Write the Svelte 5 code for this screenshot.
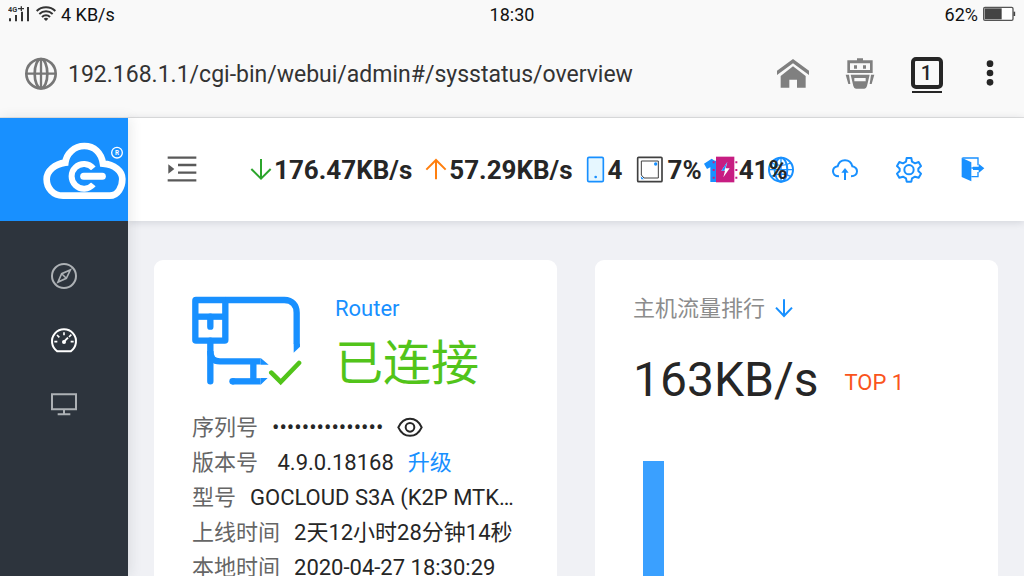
<script>
    let url = $state('192.168.1.1/cgi-bin/webui/admin#/sysstatus/overview');
    let showSerial = $state(false);
    let collapsed = $state(true);

    const hosts = [{ name: 'TOP 1', height: 270 }];

    let serial = $derived(showSerial ? 'S3A020042700181' : '•'.repeat(15));
</script>

<div class="screen" lang="zh-CN">
    <div class="status">
        <div class="status-left">
            <svg width="23" height="18" viewBox="0 0 69 54">
                <text x="0" y="22" font-size="22" font-weight="700" fill="#333">4G</text>
                <path d="M30 11h18M40 4v14" stroke="#333" stroke-width="4" />
                <path d="M6 40v9M24 30v19M42 20v29M60 6v43" stroke="#333" stroke-width="6" />
            </svg>
            <svg width="20" height="16" viewBox="0 0 60 48" fill="none" stroke="#333" stroke-width="6">
                <path d="M2 15C17 0 43 0 58 15M10 24c12-11 28-11 40 0M18 33c7-7 17-7 24 0" />
                <path d="M23 38c4-4 10-4 14 0l-7 7z" fill="#333" stroke="none" />
            </svg>
            <span>4 KB/s</span>
        </div>
        <span>18:30</span>
        <div class="status-right">
            <span>62%</span>
            <svg width="33" height="16" viewBox="0 0 99 48">
                <rect x="2" y="4" width="88" height="39" rx="4" fill="#fff" stroke="#555" stroke-width="4" />
                <path d="M5 7h51v33H5z" fill="#444" />
                <path d="M94 17v13" stroke="#444" stroke-width="5" />
            </svg>
        </div>
    </div>

    <div class="browser">
        <svg width="34" height="34" viewBox="0 0 102 102" fill="none" stroke="#777" stroke-width="8">
            <circle cx="51" cy="53" r="44" />
            <ellipse cx="51" cy="53" rx="19" ry="44" />
            <path d="M51 9v88M7 53h88" stroke-width="7" />
        </svg>
        <input class="url" type="text" aria-label="URL" bind:value={url} />
        <button aria-label="主页">
            <svg width="34" height="34" viewBox="0 0 102 102" fill="#808080">
                <path d="M51 9l48 35v13L51 22 3 57V44z" />
                <path d="M51 31l38 29v35H63V71H40v24H14V60z" />
            </svg>
        </button>
        <button aria-label="助手">
            <svg width="34" height="34" viewBox="0 0 102 102" fill="#808080">
                <path d="M42 7h18v6h29v38H13V13h29zM21 22v20h60V22z" fill-rule="evenodd" />
                <path d="M33 28h9v10h-9zM60 28h9v10h-9zM8 56h10l4 28h-6zM84 56h10l-8 28h-6z" />
                <path d="M23 56h57l-8 34q-2 8-8 8H39q-6 0-8-8zM34 66v10h34V66z" fill-rule="evenodd" />
            </svg>
        </button>
        <button class="tabs" aria-label="标签页"><span>1</span></button>
        <button class="more" aria-label="菜单">
            <svg width="34" height="34" viewBox="0 0 102 102" fill="#262626">
                <circle cx="51" cy="23" r="10" />
                <circle cx="51" cy="51" r="10" />
                <circle cx="51" cy="79" r="10" />
            </svg>
        </button>
    </div>

    <div class="app">
        <aside>
            <div class="logo">
                <svg width="86" height="60" viewBox="127 76 258 180" fill="none" stroke="#fff">
                    <path d="M190 243h140c25 0 38-26 38-50s-24-44-58-46c-5-34-27-53-56-53-31 0-54 24-57 50-31 4-56 24-56 50s19 49 49 49z" stroke-width="20" />
                    <path d="M281 161a37 37 0 1 0 0 48" stroke-width="18" />
                    <path d="M264 185h46" stroke="#1890ff" stroke-width="36" stroke-linecap="round" />
                    <path d="M252 185h56" stroke-width="21" stroke-linecap="round" />
                    <circle cx="352" cy="114" r="16" stroke-width="4" />
                    <text x="352" y="121" font-size="19" font-weight="700" text-anchor="middle" fill="#fff" stroke="none">R</text>
                </svg>
            </div>
            <nav>
                <a href="#/guide" aria-label="向导">
                    <svg width="28" height="28" viewBox="0 0 84 84" fill="none" stroke="#adb1b5" stroke-width="6">
                        <circle cx="42" cy="42" r="36" />
                        <path d="M61 24L49 49 24 60l11-25zM36 36l12 12" stroke-width="5" />
                    </svg>
                </a>
                <a href="#/sysstatus/overview" aria-label="概览">
                    <svg width="28" height="28" viewBox="0 0 84 84" fill="none" stroke="#fff" stroke-width="6">
                        <path d="M22 76a36 36 0 1 1 40 0z" stroke-linejoin="round" />
                        <path d="M42 19v9M13 47h9M62 47h9M21 27l7 7M57 33l7-7" stroke-width="5" />
                        <path d="M42 47l12-12" stroke-width="6" />
                        <circle cx="42" cy="48" r="6" fill="#fff" stroke="none" />
                    </svg>
                </a>
                <a href="#/devices" aria-label="设备">
                    <svg width="28" height="28" viewBox="0 0 84 84" fill="none" stroke="#adb1b5" stroke-width="6">
                        <path d="M6 13h72v45H6zM42 58v14M23 73h38" />
                    </svg>
                </a>
            </nav>
        </aside>

        <div class="page">
            <header>
                <button class="fold" aria-label="展开菜单" onclick={() => (collapsed = !collapsed)} aria-expanded={!collapsed}>
                    <svg width="30" height="30" viewBox="0 0 90 90" fill="none" stroke="#595959" stroke-width="7">
                        <path d="M2 8h86M33 30h55M33 53h55M2 76h86" />
                        <path d="M4 28l18 14L4 56z" fill="#595959" stroke="none" />
                    </svg>
                </button>

                <div class="stats">
                    <div class="stat">
                        <svg width="22" height="24" viewBox="0 0 66 72" fill="none" stroke="#2ca52c" stroke-width="6">
                            <path d="M33 3v58M4 33l29 29 29-29" />
                        </svg>
                        <span>176.47KB/s</span>
                    </div>
                    <div class="stat">
                        <svg width="22" height="24" viewBox="0 0 66 72" fill="none" stroke="#ff7f0e" stroke-width="6">
                            <path d="M33 64V6M4 35L33 6l29 29" />
                        </svg>
                        <span>57.29KB/s</span>
                    </div>
                    <div class="stat">
                        <svg width="20" height="28" viewBox="0 0 60 84">
                            <rect x="5" y="4" width="47" height="73" rx="4" fill="#e6f7ff" stroke="#1890ff" stroke-width="5" />
                            <circle cx="29" cy="63" r="4" fill="#1890ff" />
                        </svg>
                        <span>4</span>
                    </div>
                    <div class="stat cpu">
                        <svg width="28" height="28" viewBox="0 0 84 84" fill="none" stroke="#404040">
                            <rect x="5" y="4" width="73" height="73" rx="3" stroke-width="5" />
                            <path d="M16 15h51v51H24l-8-9z" stroke-width="3" />
                            <circle cx="59" cy="24" r="5" fill="#1890ff" stroke="none" />
                            <path d="M14 61l10 9h-8z" fill="#1890ff" stroke="none" />
                        </svg>
                        <span>7%</span>
                    </div>
                    <div class="stat memory">
                        <svg width="28" height="28" viewBox="0 0 84 84">
                            <path d="M8 16v62M76 16v62" stroke="#c71d82" stroke-width="6" stroke-dasharray="6 17" />
                            <rect x="15" y="2" width="55" height="77" fill="#c71d82" />
                            <path d="M49 18L31 44h11l-5 20 19-27H44z" fill="#fff" />
                            <path d="M49 18L31 44h9z" fill="#1890ff" />
                        </svg>
                        <span>41%</span>
                    </div>
                </div>

                <div class="tools">
                    <button aria-label="主题">
                        <svg width="28" height="28" viewBox="0 0 84 84" fill="#1890ff">
                            <path d="M26 8q16 14 32 0l23 15-9 16-10-5v44H22V34l-10 5-9-16z" />
                        </svg>
                    </button>
                    <button aria-label="语言">
                        <svg width="28" height="28" viewBox="0 0 84 84" fill="none" stroke="#1890ff" stroke-width="6">
                            <circle cx="42" cy="41" r="36" />
                            <ellipse cx="42" cy="41" rx="19" ry="36" />
                            <path d="M42 5v72M6 41h72M13 21q29 14 58 0M13 61q29-14 58 0" stroke-width="4" />
                        </svg>
                    </button>
                    <button aria-label="云端">
                        <svg width="28" height="28" viewBox="0 0 84 84" fill="none" stroke="#1890ff" stroke-width="6">
                            <path d="M24 61C11 61 6 53 6 46c0-9 7-14 14-15 3-12 12-18 22-18s19 6 22 18c8 2 14 7 14 15s-6 15-18 15" />
                            <path d="M42 72V44" />
                            <path d="M42 36l11 14H31z" fill="#1890ff" stroke="none" />
                        </svg>
                    </button>
                    <button aria-label="设置">
                        <svg width="28" height="28" viewBox="0 0 84 84" fill="none" stroke="#1890ff" stroke-width="6" stroke-linejoin="round">
                            <path d="M35 6h14l2 11 9 5 11-4 7 12-8 8v7l8 8-7 12-11-3-9 5-2 10H35l-2-10-9-5-11 3-7-12 8-8v-7l-8-8 7-12 11 4 9-5z" />
                            <circle cx="42" cy="41" r="14" />
                        </svg>
                    </button>
                    <button aria-label="退出">
                        <svg width="28" height="28" viewBox="0 0 84 84" fill="none" stroke="#1890ff" stroke-width="4">
                            <path d="M10 6h47v22M57 48v14H37M37 36h30" />
                            <path d="M8 5l29 14v57L8 63zM42 32h17V23l17 14-17 14v-9H42z" fill="#1890ff" stroke="none" />
                        </svg>
                    </button>
                </div>
            </header>

            <main>
                <section class="card">
                    <div class="summary">
                        <svg width="110" height="90" viewBox="0 0 330 270" fill="none" stroke="#1890ff" stroke-width="19">
                            <rect x="10" y="12" width="90" height="122" rx="2" />
                            <path d="M10 62h90" />
                            <path d="M55 62v30M55 134v122" stroke-linecap="round" />
                            <path d="M100 12h177c24 0 37 17 37 38v94" />
                            <path d="M305 143v27l19-18v-9z" fill="#1890ff" stroke="none" />
                            <path d="M55 165c0 22 10 31 29 31h122M184 196v60" />
                            <path d="M206 186l24 20h-24zM206 266v-20h21z" fill="#1890ff" stroke="none" />
                            <path d="M122 256h84" />
                            <circle cx="122" cy="256" r="10" fill="#1890ff" stroke="none" />
                            <path d="M238 230l28 28 55-57" stroke="#52c41a" stroke-width="14" stroke-linecap="round" />
                        </svg>
                        <div class="state">
                            <a href="#/router">Router</a>
                            <strong>已连接</strong>
                        </div>
                    </div>
                    <dl>
                        <div class="row">
                            <dt>序列号</dt>
                            <dd>{serial}</dd>
                            <button aria-label="显示序列号" onclick={() => (showSerial = !showSerial)}>
                                <svg width="26" height="22" viewBox="0 0 78 66" fill="none" stroke="#262626" stroke-width="6">
                                    <path d="M4 31C20-3 58-3 74 31 58 65 20 65 4 31z" />
                                    <circle cx="39" cy="31" r="13" />
                                </svg>
                            </button>
                        </div>
                        <div class="row">
                            <dt>版本号</dt>
                            <dd>&nbsp;4.9.0.18168</dd>
                            <a href="#/upgrade">升级</a>
                        </div>
                        <div class="row">
                            <dt>型号</dt>
                            <dd>GOCLOUD S3A (K2P MTK7621)</dd>
                        </div>
                        <div class="row">
                            <dt>上线时间</dt>
                            <dd>2天12小时28分钟14秒</dd>
                        </div>
                        <div class="row">
                            <dt>本地时间</dt>
                            <dd>2020-04-27 18:30:29</dd>
                        </div>
                    </dl>
                </section>

                <section class="card">
                    <div class="title">
                        <h2>主机流量排行</h2>
                        <svg width="18" height="20" viewBox="0 0 54 60" fill="none" stroke="#1890ff" stroke-width="6">
                            <path d="M27 1v50M3 26l24 25 24-25" />
                        </svg>
                    </div>
                    <div class="rank">
                        <span class="speed">163KB/s</span>
                        <span class="top">TOP 1</span>
                    </div>
                    <div class="chart">
                        {#each hosts as host}
                            <div class="bar" title={host.name} style="height: {host.height}px"></div>
                        {/each}
                    </div>
                </section>
            </main>
        </div>
    </div>
</div>

<style>
    :global(body) {
        margin: 0;
        overflow: hidden;
    }
    .screen {
        display: flex;
        flex-direction: column;
        height: 100vh;
        overflow: hidden;
        font-family: Roboto, "Noto Sans CJK SC", sans-serif;
        font-size: 22px;
        color: #262626;
        background: #f0f1f5;
    }
    svg {
        display: block;
        flex: none;
    }
    button {
        display: flex;
        align-items: center;
        justify-content: center;
        padding: 0;
        border: 0;
        background: none;
        font: inherit;
        color: inherit;
        cursor: pointer;
    }
    a {
        color: #1890ff;
        text-decoration: none;
    }

    .status {
        display: grid;
        grid-template-columns: 1fr auto 1fr;
        align-items: center;
        flex: none;
        height: 28px;
        padding: 0 8px;
        background: #f9f9f9;
        color: #111;
        font-size: 18px;
    }
    .status-left,
    .status-right {
        display: flex;
        align-items: center;
        gap: 5px;
    }
    .status-right {
        justify-content: flex-end;
    }

    .browser {
        display: flex;
        align-items: center;
        flex: none;
        box-sizing: border-box;
        height: 90px;
        padding: 0 4px 0 24px;
        border-bottom: 1px solid #e2e2e2;
        background: #f9f9f9;
    }
    .browser button {
        width: 67px;
        height: 64px;
    }
    .browser .more {
        width: 60px;
    }
    .url {
        flex: 1;
        min-width: 0;
        margin-left: 10px;
        padding: 4px 0 0;
        border: 0;
        outline: 0;
        background: none;
        font: inherit;
        font-size: 23px;
        color: #333;
    }
    .tabs span {
        position: relative;
        box-sizing: border-box;
        width: 32px;
        height: 32px;
        border: 4px solid #262626;
        border-radius: 5px;
        font-size: 20px;
        font-weight: 500;
        line-height: 24px;
    }
    .tabs span::after {
        content: "";
        position: absolute;
        left: -3px;
        right: -3px;
        bottom: -8px;
        height: 2px;
        background: #262626;
    }

    .app {
        display: flex;
        flex: 1;
        min-height: 0;
    }
    aside {
        flex: none;
        width: 128px;
        background: #2d343d;
        box-shadow: 2px 0 12px rgba(29, 35, 41, 0.1);
        z-index: 2;
    }
    .logo {
        display: flex;
        align-items: center;
        justify-content: flex-end;
        height: 103px;
        background: #1890ff;
    }
    nav {
        display: flex;
        flex-direction: column;
        padding-top: 23px;
    }
    nav a {
        display: flex;
        align-items: center;
        justify-content: center;
        height: 64px;
    }

    .page {
        flex: 1;
        min-width: 0;
    }
    header {
        position: relative;
        display: flex;
        align-items: center;
        height: 103px;
        padding: 0 19px 0 22px;
        background: #fff;
        box-shadow: 0 1px 8px rgba(0, 21, 41, 0.14);
    }
    .fold {
        width: 64px;
        height: 64px;
    }
    /* the readings run over the first tool icons on narrow screens */
    .stats {
        position: relative;
        z-index: 1;
        display: flex;
        flex: 1;
        gap: 13px;
        min-width: 0;
        margin-left: 36px;
        font-size: 26px;
        font-weight: 700;
        white-space: nowrap;
        pointer-events: none;
    }
    .stat {
        display: flex;
        align-items: center;
        gap: 2px;
    }
    .cpu {
        gap: 4px;
    }
    .memory {
        gap: 0;
        margin-left: -4px;
    }
    .tools {
        display: flex;
    }
    .tools button {
        width: 64px;
        height: 64px;
    }

    main {
        display: grid;
        grid-template-columns: 1fr 1fr;
        gap: 38px;
        padding: 39px 26px;
    }
    .card {
        min-width: 0;
        padding: 32px 38px;
        border-radius: 9px;
        background: #fff;
    }
    .summary {
        display: flex;
        align-items: flex-start;
        gap: 33px;
    }
    .summary svg {
        margin-top: 4px;
    }
    .state {
        display: flex;
        flex-direction: column;
    }
    .state a {
        line-height: 34px;
    }
    .state strong {
        font-size: 48px;
        font-weight: 400;
        line-height: 76px;
        color: #52c41a;
    }
    dl {
        margin: 8px 0 0;
    }
    .row {
        display: flex;
        align-items: center;
        gap: 14px;
        line-height: 35px;
        white-space: nowrap;
    }
    dt {
        flex: none;
        color: #666;
    }
    dd {
        min-width: 0;
        margin: 0;
        overflow: hidden;
        text-overflow: ellipsis;
    }

    .title {
        display: flex;
        align-items: center;
        gap: 10px;
    }
    h2 {
        margin: 0;
        font-size: 22px;
        font-weight: 400;
        line-height: 34px;
        color: #8c8c8c;
    }
    .rank {
        display: flex;
        align-items: center;
        gap: 26px;
        margin-top: 16px;
        line-height: 76px;
    }
    .speed {
        font-size: 48px;
    }
    .top {
        padding-top: 5px;
        line-height: 34px;
        color: #fa541c;
    }
    .chart {
        display: flex;
        align-items: flex-end;
        margin-top: 43px;
        padding-left: 10px;
    }
    .bar {
        width: 21px;
        background: #3aa0ff;
    }
</style>
